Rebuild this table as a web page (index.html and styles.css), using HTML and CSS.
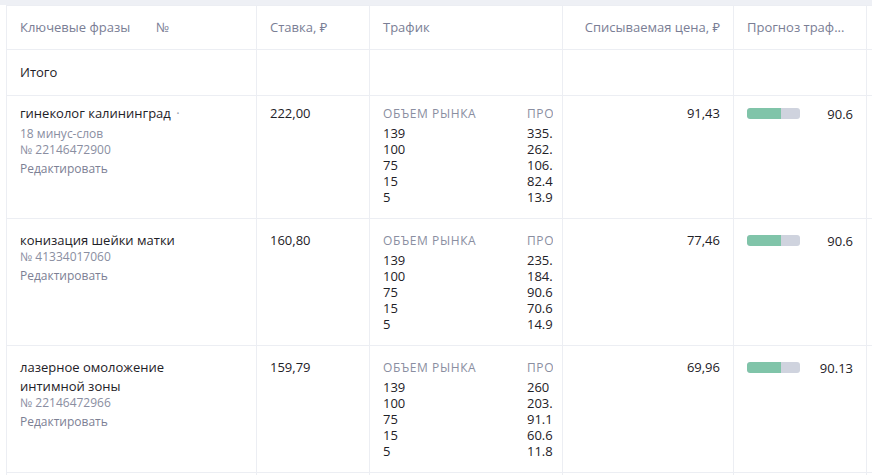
FILE: index.html
```html
<!DOCTYPE html>
<html lang="ru">
<head>
<meta charset="utf-8">
<link rel="stylesheet" href="styles.css">
</head>
<body>
<div class="page">
  <div class="topband"></div>
  <div class="wrap">
    <table class="grid">
      <colgroup>
        <col class="c1"><col class="c2"><col class="c3"><col class="c4"><col class="c5"><col class="c6">
      </colgroup>
      <thead>
        <tr class="head">
          <th><span class="h-phrase">Ключевые фразы</span><span class="h-no">№</span></th>
          <th>Ставка, ₽</th>
          <th>Трафик</th>
          <th class="right">Списываемая цена, ₽</th>
          <th>Прогноз траф...</th>
          <th></th>
        </tr>
      </thead>
      <tbody>
        <tr class="total">
          <td>Итого</td><td></td><td></td><td></td><td></td><td></td>
        </tr>
        <tr class="row r1">
          <td>
            <div class="phrase">гинеколог калининград <span class="dot">·</span></div>
            <div class="sub">18 минус-слов</div>
            <div class="sub">№ 22146472900</div>
            <div class="edit">Редактировать</div>
          </td>
          <td><div class="val">222,00</div></td>
          <td>
            <div class="traffic">
              <div class="tcol">
                <div class="th">ОБЪЕМ РЫНКА</div>
                <div>139</div><div>100</div><div>75</div><div>15</div><div>5</div>
              </div>
              <div class="tcol">
                <div class="th">ПРОГНОЗ</div>
                <div>335.36</div><div>262.57</div><div>106.09</div><div>82.4</div><div>13.9</div>
              </div>
            </div>
          </td>
          <td class="right"><div class="val">91,43</div></td>
          <td>
            <div class="fc"><div class="bar"><div class="fill" style="width:34px"></div></div><span>90.6</span></div>
          </td>
          <td></td>
        </tr>
        <tr class="row r2">
          <td>
            <div class="phrase">конизация шейки матки</div>
            <div class="sub">№ 41334017060</div>
            <div class="edit">Редактировать</div>
          </td>
          <td><div class="val">160,80</div></td>
          <td>
            <div class="traffic">
              <div class="tcol">
                <div class="th">ОБЪЕМ РЫНКА</div>
                <div>139</div><div>100</div><div>75</div><div>15</div><div>5</div>
              </div>
              <div class="tcol">
                <div class="th">ПРОГНОЗ</div>
                <div>235.34</div><div>184.52</div><div>90.6</div><div>70.6</div><div>14.9</div>
              </div>
            </div>
          </td>
          <td class="right"><div class="val">77,46</div></td>
          <td>
            <div class="fc"><div class="bar"><div class="fill" style="width:34px"></div></div><span>90.6</span></div>
          </td>
          <td></td>
        </tr>
        <tr class="row r3">
          <td>
            <div class="phrase">лазерное омоложение<br>интимной зоны</div>
            <div class="sub">№ 22146472966</div>
            <div class="edit">Редактировать</div>
          </td>
          <td><div class="val">159,79</div></td>
          <td>
            <div class="traffic">
              <div class="tcol">
                <div class="th">ОБЪЕМ РЫНКА</div>
                <div>139</div><div>100</div><div>75</div><div>15</div><div>5</div>
              </div>
              <div class="tcol">
                <div class="th">ПРОГНОЗ</div>
                <div>260</div><div>203.04</div><div>91.1</div><div>60.6</div><div>11.8</div>
              </div>
            </div>
          </td>
          <td class="right"><div class="val">69,96</div></td>
          <td>
            <div class="fc"><div class="bar"><div class="fill" style="width:34px"></div></div><span>90.13</span></div>
          </td>
          <td></td>
        </tr>
        <tr class="empty">
          <td></td><td></td><td></td><td></td><td></td><td></td>
        </tr>
      </tbody>
    </table>
  </div>
</div>
</body>
</html>
```

FILE: styles.css
```css
html, body {
  margin: 0;
  padding: 0;
  background: #ffffff;
}
body {
  font-family: "Open Sans", "Noto Sans", sans-serif;
  font-size: 13px;
  color: #1e2127;
  width: 872px;
  height: 475px;
  overflow: hidden;
}
.topband {
  height: 5px;
  background: #eef0f5;
}
.wrap {
  padding-left: 6px;
  overflow: hidden;
  width: 866px;
}
.grid {
  border-collapse: collapse;
  table-layout: fixed;
  width: 900px;
}
.c1 { width: 250px; }
.c2 { width: 113px; }
.c3 { width: 193px; }
.c4 { width: 171px; }
.c5 { width: 133px; }
.c6 { width: 40px; }
.grid th, .grid td {
  border: 1px solid #eceef3;
  padding: 0 13px 0 13px;
  vertical-align: top;
  text-align: left;
  overflow: hidden;
}
.grid th.right, .grid td.right { text-align: right; }
.head th {
  height: 42px;
  vertical-align: middle;
  font-weight: 400;
  color: #7a7e95;
  white-space: nowrap;
  padding-bottom: 1px;
}
.h-phrase { display: inline-block; width: 136px; }
.total td {
  height: 44px;
  vertical-align: middle;
  padding-bottom: 1px;
}
.r1 td { height: 114px; padding-top: 8px; }
.r2 td, .r3 td { height: 114px; padding-top: 12px; }
.empty td { height: 20px; }
.phrase { line-height: 19px; }
.dot { color: #9a9eae; padding-left: 2px; }
.sub {
  font-size: 12px;
  line-height: 16px;
  color: #8a8ea1;
}
.phrase + .sub { margin-top: -1px; }
.r1 .phrase + .sub { margin-top: 3px; }
.edit {
  font-size: 12px;
  line-height: 16px;
  margin-top: 3px;
  color: #7c8094;
}
.val { line-height: 19px; }
.traffic {
  width: 170px;
  overflow: hidden;
  display: flex;
  line-height: 16px;
  white-space: nowrap;
}
.tcol { flex: none; }
.tcol:first-child { width: 144px; }
.th {
  font-size: 12px;
  letter-spacing: 0.6px;
  color: #8a8ea1;
  line-height: 19px;
  margin-bottom: 2px;
}
.fc {
  display: flex;
  align-items: center;
  justify-content: space-between;
  height: 19px;
}
.bar {
  width: 53px;
  height: 11px;
  border-radius: 3px;
  background: #cfd3de;
  overflow: hidden;
}
.fill {
  height: 100%;
  background: #80c4a9;
  border-radius: 3px 0 0 3px;
}
```
